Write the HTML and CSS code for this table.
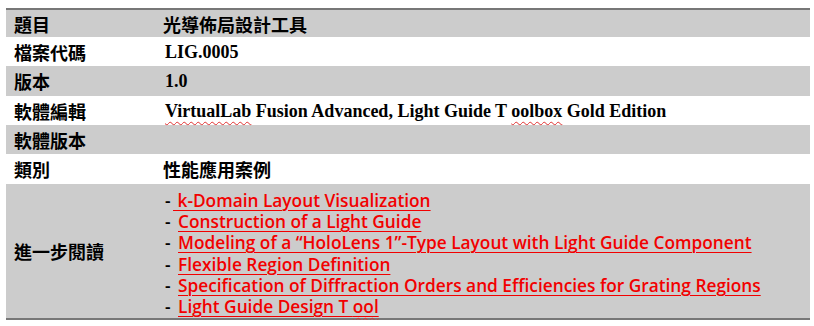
FILE: index.html
```html
<!DOCTYPE html>
<html lang="zh-Hant">
<head>
<meta charset="utf-8">
<title>光導佈局設計工具</title>
<link rel="stylesheet" href="styles.css">
</head>
<body>
<table class="info">
  <tr class="row shade h28">
    <td class="label">題目</td>
    <td class="value cjk">光導佈局設計工具</td>
  </tr>
  <tr class="row h29">
    <td class="label">檔案代碼</td>
    <td class="value serif">LIG.0005</td>
  </tr>
  <tr class="row shade h30">
    <td class="label">版本</td>
    <td class="value serif">1.0</td>
  </tr>
  <tr class="row h29">
    <td class="label">軟體編輯</td>
    <td class="value serif"><span class="spell">VirtualLab</span> Fusion Advanced, Light Guide T <span class="spell">oolbox</span> Gold Edition</td>
  </tr>
  <tr class="row shade h29">
    <td class="label">軟體版本</td>
    <td class="value"></td>
  </tr>
  <tr class="row h30">
    <td class="label">類別</td>
    <td class="value cjk">性能應用案例</td>
  </tr>
  <tr class="row shade last">
    <td class="label">進一步閱讀</td>
    <td class="value">
      <ul class="links">
        <li><span class="dash">-</span><a class="link first" href="#"> k-Domain Layout Visualization</a></li>
        <li><span class="dash">-</span><a class="link" href="#">Construction of a Light Guide</a></li>
        <li><span class="dash">-</span><a class="link" href="#">Modeling of a “HoloLens 1”-Type Layout with Light Guide Component</a></li>
        <li><span class="dash">-</span><a class="link" href="#">Flexible Region Definition</a></li>
        <li><span class="dash">-</span><a class="link" href="#">Specification of Diffraction Orders and Efficiencies for Grating Regions</a></li>
        <li><span class="dash">-</span><a class="link" href="#">Light Guide Design T <span class="spell">ool</span></a></li>
      </ul>
    </td>
  </tr>
</table>
</body>
</html>
```
FILE: styles.css
```css
html, body {
  margin: 0;
  padding: 0;
  background: #ffffff;
}
body {
  padding: 8px 4px 0 6px;
  font-family: "Noto Sans CJK TC", "Noto Sans", sans-serif;
  color: #000;
}
.info {
  width: 804px;
  border-collapse: collapse;
  border-top: 2px solid #777777;
  border-bottom: 2px solid #777777;
}
.row.shade { background: #cccccc; }
.h28 { height: 28px; }
.h29 { height: 29px; }
.h30 { height: 30px; }
.last { height: 135px; }
.label {
  width: 141px;
  padding: 0 0 0 8px;
  font-size: 18px;
  font-weight: 700;
  line-height: 20px;
  vertical-align: middle;
}
.value {
  padding: 0 0 0 8px;
  vertical-align: middle;
  line-height: 20px;
}
.cjk {
  font-size: 18px;
  font-weight: 700;
}
.serif {
  font-family: "Liberation Serif", "Times New Roman", serif;
  font-weight: 700;
  font-size: 18px;
  padding-left: 10px;
}
.spell {
  text-decoration: underline wavy #e03030;
  text-decoration-thickness: 1px;
  text-underline-offset: 4px;
}
.links {
  list-style: none;
  margin: 0;
  padding: 5px 0 0 2px;
  font-family: "Open Sans", "Noto Sans", sans-serif;
  font-weight: 600;
  font-size: 17.3px;
  line-height: 21.3px;
}
.dash {
  display: inline-block;
  width: 13px;
  color: #000;
}
.link {
  color: #f20000;
  text-decoration: underline;
  text-decoration-thickness: 1px;
  text-underline-offset: 3px;
}
.link.first {
  margin-left: -5px;
}
```
